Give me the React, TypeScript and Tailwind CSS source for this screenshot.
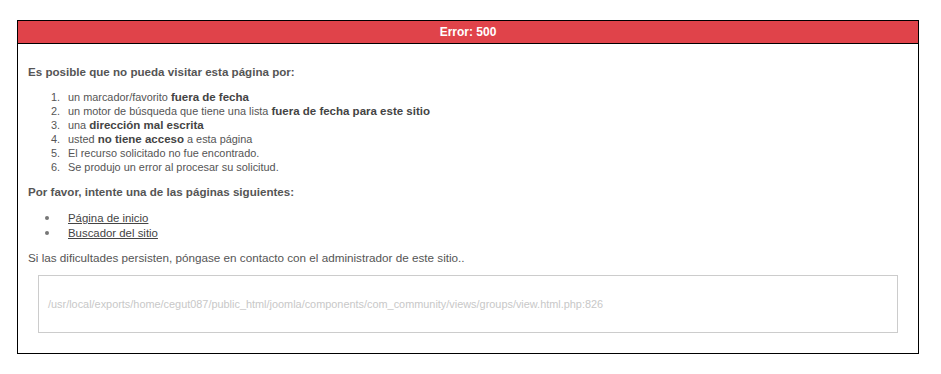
export default function App() {
  const reasons = [
    <>un marcador/favorito <b>fuera de fecha</b></>,
    <>un motor de búsqueda que tiene una lista <b>fuera de fecha para este sitio</b></>,
    <>una <b>dirección mal escrita</b></>,
    <>usted <b>no tiene acceso</b> a esta página</>,
    <>El recurso solicitado no fue encontrado.</>,
    <>Se produjo un error al procesar su solicitud.</>,
  ];

  return (
    <div className="min-h-screen bg-white pt-5 pl-[17px] font-['Liberation_Sans',Arial,sans-serif] text-[11.6px] text-[#555]">
      <div className="w-[902px] border border-black">
        <div className="h-[23px] bg-[#e0434a] border-b border-black text-center text-white font-bold text-[12px] leading-[22px]">
          Error: 500
        </div>

        <div className="px-5 pt-[21px] pb-5">
          <p className="-ml-[10px] font-bold leading-[14px]">
            Es posible que no pueda visitar esta página por:
          </p>
          <ol className="list-decimal pl-[25px] mt-[11px] leading-[14px] text-[10.9px]">
            {reasons.map((r, i) => (
              <li key={i} className="pl-[5px] [&_b]:text-[#444] [&_b]:text-[11.5px]">
                {r}
              </li>
            ))}
          </ol>

          <p className="-ml-[10px] mt-[11px] font-bold leading-[14px]">
            Por favor, intente una de las páginas siguientes:
          </p>
          <ul className="list-disc pl-[22px] mt-[11px] leading-[14px] marker:text-[#777] marker:text-[14px]">
            <li className="pl-[8px]">
              <a href="#" className="underline text-[#444] text-[11.4px]">Página de inicio</a>
            </li>
            <li className="pl-[8px]">
              <a href="#" className="underline text-[#444] text-[11.4px]">Buscador del sitio</a>
            </li>
          </ul>

          <p className="-ml-[10px] mt-[11px] leading-[14px] text-[11.7px]">
            Si las dificultades persisten, póngase en contacto con el administrador de este sitio..
          </p>

          <div className="mt-[10px] h-[58px] border border-[#ccc] px-[9px] flex items-center text-[10.9px] text-[#c8c8c8]">
            /usr/local/exports/home/cegut087/public_html/joomla/components/com_community/views/groups/view.html.php:826
          </div>
        </div>
      </div>
    </div>
  );
}
